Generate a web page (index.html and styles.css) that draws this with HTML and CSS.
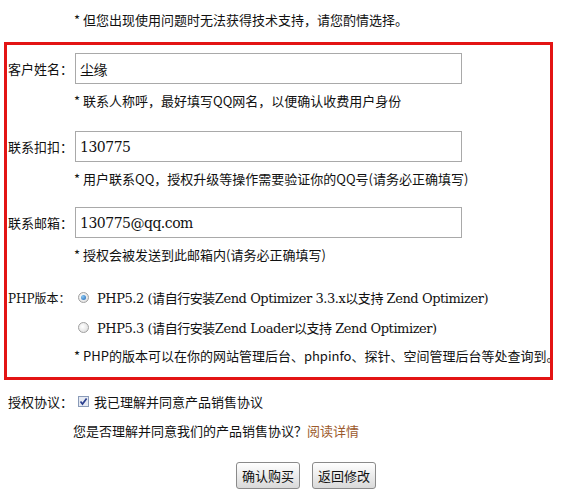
FILE: index.html
```html
<!DOCTYPE html>
<html lang="zh-CN">
<head>
    <meta charset="UTF-8">
    <title>确认订单</title>
    <link rel="stylesheet" href="styles.css">
</head>
<body>

    <!-- Support warning -->
    <p class="note top-note">* 但您出现使用问题时无法获得技术支持，请您酌情选择。</p>

    <!-- Customer info box -->
    <div class="info-box">
        <div class="field">
            <label class="label">客户姓名：</label>
            <input class="text-input" type="text" value="尘缘">
        </div>
        <p class="note">* 联系人称呼，最好填写QQ网名，以便确认收费用户身份</p>

        <div class="field gap">
            <label class="label">联系扣扣：</label>
            <input class="text-input" type="text" value="130775">
        </div>
        <p class="note">* 用户联系QQ，授权升级等操作需要验证你的QQ号(请务必正确填写)</p>

        <div class="field gap small-gap">
            <label class="label">联系邮箱：</label>
            <input class="text-input" type="text" value="130775@qq.com">
        </div>
        <p class="note">* 授权会被发送到此邮箱内(请务必正确填写)</p>

        <div class="radio-row first-radio">
            <span class="label serif-label">PHP版本：</span>
            <label class="radio-opt"><span class="radio checked"></span>PHP5.2 (请自行安装Zend Optimizer 3.3.x以支持 Zend Optimizer)</label>
        </div>
        <div class="radio-row">
            <span class="label"></span>
            <label class="radio-opt"><span class="radio"></span>PHP5.3 (请自行安装Zend Loader以支持 Zend Optimizer)</label>
        </div>
        <p class="note php-note">* PHP的版本可以在你的网站管理后台、phpinfo、探针、空间管理后台等处查询到。</p>
    </div>

    <!-- Agreement -->
    <div class="agree-row">
        <span class="label">授权协议：</span>
        <span class="checkbox">
            <svg width="11" height="11" viewBox="0 0 11 11">
                <rect x="0.5" y="0.5" width="10" height="10" fill="#e6eaf3" stroke="#8a9bb8"/>
                <path d="M2.5 5.5 L4.5 8 L8.6 2.6" fill="none" stroke="#2a3f8f" stroke-width="1.7"/>
            </svg>
        </span>
        <span>我已理解并同意产品销售协议</span>
    </div>
    <p class="note agree-note">您是否理解并同意我们的产品销售协议？<a href="#" class="read-link">阅读详情</a></p>

    <div class="buttons">
        <button class="btn">确认购买</button>
        <button class="btn">返回修改</button>
    </div>

</body>
</html>
```

FILE: styles.css
```css
body {
    margin: 0;
    background-color: white;
    font-family: 'Noto Sans CJK SC', sans-serif;
    font-size: 13px;
    color: #111;
}
.note {
    margin: 0;
    padding-left: 67px;
    height: 20px;
    line-height: 20px;
    white-space: nowrap;
}
.top-note {
    margin-top: 10px;
    padding-left: 74px;
}
.info-box {
    margin: 12px 0 0 4px;
    width: 543px;
    border: 3px solid #e31414;
    padding: 8px 0 11px 0;
    overflow: hidden;
}
.info-box .note {
    margin-top: 7px;
}
.field {
    display: flex;
    align-items: center;
    height: 31px;
}
.field.gap {
    margin-top: 20px;
}
.field.small-gap {
    margin-top: 18px;
}
.label {
    width: 68px;
    padding-left: 1px;
    box-sizing: border-box;
    flex-shrink: 0;
    white-space: nowrap;
}
.serif-label {
    font-family: 'DejaVu Serif', 'Noto Sans CJK SC', serif;
    font-size: 12px;
}
.text-input {
    width: 387px;
    height: 31px;
    box-sizing: border-box;
    border: 1px solid #a9a9a9;
    padding: 0 4px;
    font-family: 'DejaVu Serif', 'Noto Sans CJK SC', serif;
    font-size: 14px;
    letter-spacing: -0.5px;
    color: #111;
    outline: none;
}
.radio-row {
    display: flex;
    align-items: center;
    height: 30px;
}
.first-radio {
    margin-top: 17px;
}
.radio-opt {
    display: flex;
    align-items: center;
    font-family: 'DejaVu Serif', 'Noto Sans CJK SC', serif;
    font-size: 13px;
    white-space: nowrap;
    letter-spacing: -0.45px;
}
.radio {
    width: 11px;
    height: 11px;
    border-radius: 50%;
    border: 1px solid #a0a0a0;
    background: radial-gradient(circle at 40% 40%, #ffffff, #d8d8d8);
    margin: 0 8px 0 3px;
    box-sizing: border-box;
    position: relative;
}
.radio.checked::after {
    content: '';
    position: absolute;
    left: 2px;
    top: 2px;
    width: 5px;
    height: 5px;
    border-radius: 50%;
    background: radial-gradient(circle at 35% 35%, #8cc8f0, #1a63b8);
}
.info-box .php-note {
    margin-top: 4px;
}
.agree-row {
    display: flex;
    align-items: center;
    height: 20px;
    margin-top: 11px;
}
.agree-row .label {
    width: 78px;
    padding-left: 8px;
}
.checkbox {
    display: flex;
    align-items: center;
    margin-right: 5px;
}
.agree-note {
    margin-top: 10px;
    padding-left: 73px;
}
.read-link {
    color: #9c5a2c;
    text-decoration: none;
}
.buttons {
    display: flex;
    gap: 12px;
    margin-top: 21px;
    padding-left: 236px;
}
.btn {
    width: 64px;
    height: 27px;
    border: 1px solid #8a8a8a;
    border-radius: 3px;
    background: linear-gradient(#ffffff, #d9d9d9);
    font-family: 'Noto Sans CJK SC', sans-serif;
    font-size: 13px;
    color: #111;
    padding: 0;
    cursor: pointer;
}
```
